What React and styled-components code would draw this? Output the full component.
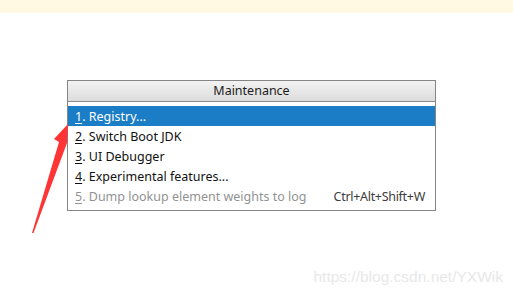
import React from 'react';
import styled, { createGlobalStyle } from 'styled-components';

const GlobalStyle = createGlobalStyle`
  html, body {
    margin: 0;
    padding: 0;
    background: #ffffff;
  }
  body {
    font-family: "Noto Sans", "Liberation Sans", sans-serif;
  }
`;

const Page = styled.div`
  position: relative;
  width: 513px;
  height: 295px;
  overflow: hidden;
  display: flex;
  flex-direction: column;
`;

const TopBand = styled.div`
  height: 13px;
  background: #fff9e3;
  flex-shrink: 0;
`;

const Popup = styled.div`
  margin: 67px 0 0 67px;
  width: 367px;
  border: 1px solid #858585;
  background: #ffffff;
  position: relative;
  z-index: 1;
`;

const PopupTitle = styled.div`
  height: 20px;
  line-height: 20px;
  text-align: center;
  font-size: 12.5px;
  color: #1c1c1c;
  background: linear-gradient(to bottom, #f3f3f3, #dcdcdc);
  border-bottom: 1px solid #8a8a8a;
`;

const ItemList = styled.div`
  padding: 4px 0 4px;
`;

const Item = styled.div`
  height: 20px;
  display: flex;
  align-items: center;
  justify-content: space-between;
  padding: 0 10px 0 7px;
  font-size: 12.5px;
  white-space: nowrap;
  background: ${(p) => (p.$selected ? '#1b7dc6' : 'transparent')};
  color: ${(p) => (p.$selected ? '#ffffff' : p.$disabled ? '#929292' : '#111111')};
`;

const Shortcut = styled.span`
  color: #3c3c3c;
  letter-spacing: -0.3px;
`;

const Mnemonic = styled.u`
  text-decoration-thickness: 1px;
  text-underline-offset: 2px;
`;

const Arrow = styled.svg`
  position: absolute;
  left: 0;
  top: 0;
  width: 513px;
  height: 295px;
  pointer-events: none;
  z-index: 2;
`;

const Watermark = styled.div`
  margin-top: auto;
  align-self: flex-end;
  padding: 0 10px 9px 0;
  font-family: "Liberation Sans", Arial, sans-serif;
  font-size: 15.5px;
  color: #e8e8e8;
`;

const items = [
  { key: '1', label: 'Registry...', selected: true },
  { key: '2', label: 'Switch Boot JDK' },
  { key: '3', label: 'UI Debugger' },
  { key: '4', label: 'Experimental features...' },
  { key: '5', label: 'Dump lookup element weights to log', disabled: true, shortcut: 'Ctrl+Alt+Shift+W' },
];

export default function App() {
  return (
    <Page>
      <GlobalStyle />
      <TopBand />
      <Popup>
        <PopupTitle>Maintenance</PopupTitle>
        <ItemList>
          {items.map((it) => (
            <Item key={it.key} $selected={it.selected} $disabled={it.disabled}>
              <span>
                <Mnemonic>{it.key}</Mnemonic>. {it.label}
              </span>
              {it.shortcut && <Shortcut>{it.shortcut}</Shortcut>}
            </Item>
          ))}
        </ItemList>
      </Popup>
      <Arrow viewBox="0 0 513 295">
        <polygon
          points="68,124 67,143 33.5,233 32,233 59,142 54,139"
          fill="#ff3434"
        />
      </Arrow>
      <Watermark>https://blog.csdn.net/YXWik</Watermark>
    </Page>
  );
}
